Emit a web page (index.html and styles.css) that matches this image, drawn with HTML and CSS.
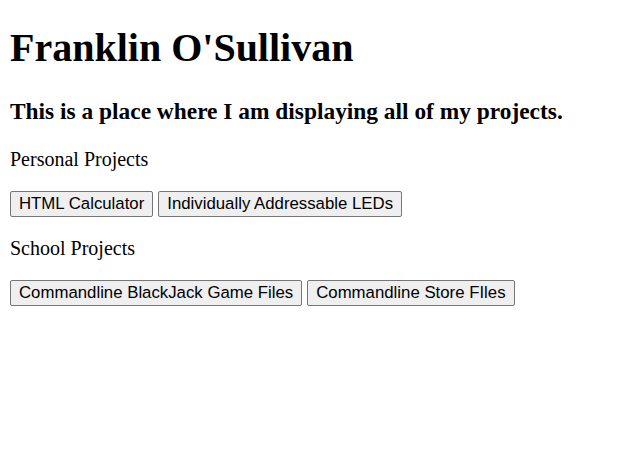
FILE: index.html
```html
<!DOCTYPE html>
<html>
<head>
<meta charset="utf-8">
<link rel="stylesheet" href="styles.css">
</head>
<body class="page">
<h1 class="title">Franklin O'Sullivan</h1>
<h3 class="subtitle">This is a place where I am displaying all of my projects.</h3>
<p class="section">Personal Projects</p>
<div class="buttons">
<button class="btn">HTML Calculator</button>
<button class="btn">Individually Addressable LEDs</button>
</div>
<p class="section">School Projects</p>
<div class="buttons">
<button class="btn">Commandline BlackJack Game Files</button>
<button class="btn">Commandline Store FIles</button>
</div>
</body>
</html>
```
FILE: styles.css
```css
.page {
  margin: 10px;
  font-family: "Liberation Serif", "Times New Roman", serif;
  font-size: 20px;
  color: #000;
  background: #fff;
}
.title {
  font-size: 40px;
  margin: 14px 0 26.8px;
}
.subtitle {
  font-size: 23.4px;
  margin: 23.4px 0;
}
.section {
  font-size: 20px;
  margin: 20px 0;
}
.buttons {
  display: flex;
  gap: 5px;
}
.btn {
  font-family: "Liberation Sans", Arial, sans-serif;
  font-size: 16.8px;
  color: #000;
  background: #efefef;
  border: 1px solid #767676;
  border-radius: 2px;
  padding: 2px 8px;
}
```
